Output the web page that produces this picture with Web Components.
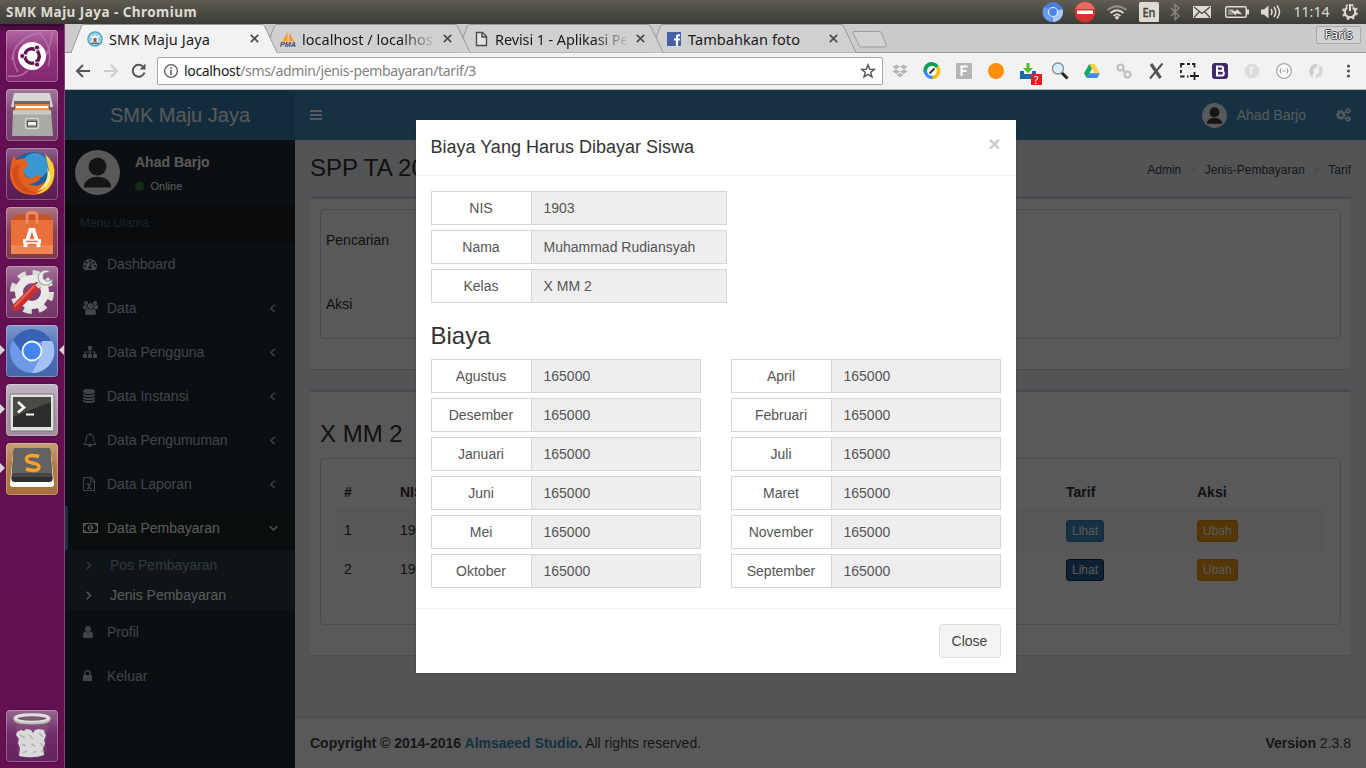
<!DOCTYPE html>
<html lang="id">
<head>
<meta charset="utf-8">
<title>SMK Maju Jaya</title>
<style>
html,body{margin:0;height:100%;overflow:hidden;background:#5e0f50}
</style>
</head>
<body>
<desktop-shell></desktop-shell>
<script>
function define(name, html, setup) {
  const tpl = document.createElement('template');
  tpl.innerHTML = html;
  customElements.define(name, class extends HTMLElement {
    connectedCallback() {
      if (this.shadowRoot) return;
      this.attachShadow({mode: 'open'}).appendChild(tpl.content.cloneNode(true));
      if (setup) setup(this, this.shadowRoot);
    }
  });
}

/* One line of text whose tracking is adjusted so that it takes a given width. */
define('fit-text', `<style>:host{display:inline-block;white-space:nowrap}span{display:inline-block}</style><span><slot></slot></span>`, (el, root) => {
  const s = root.querySelector('span');
  const n = el.textContent.length, w = s.getBoundingClientRect().width;
  if (w) s.style.letterSpacing = ((+el.getAttribute('width') - w) / n).toFixed(3) + 'px';
});

const FA = {
  user: [1280, 'M1280 1399q0 109-62.5 187t-150.5 78h-854q-88 0-150.5-78t-62.5-187q0-85 8.5-160.5t31.5-152 58.5-131 94-89 134.5-34.5q131 128 313 128t313-128q76 0 134.5 34.5t94 89 58.5 131 31.5 152 8.5 160.5zm-256-887q0 159-112.5 271.5t-271.5 112.5-271.5-112.5-112.5-271.5 112.5-271.5 271.5-112.5 271.5 112.5 112.5 271.5z'],
  lock: [1152, 'M320 768h512v-192q0-106-75-181t-181-75-181 75-75 181v192zm832 96v576q0 40-28 68t-68 28h-960q-40 0-68-28t-28-68v-576q0-40 28-68t68-28h32v-192q0-184 132-316t316-132 316 132 132 316v192h32q40 0 68 28t28 68z'],
  sitemap: [1792, 'M1792 1248v320q0 40-28 68t-68 28h-320q-40 0-68-28t-28-68v-320q0-40 28-68t68-28h96v-192h-512v192h96q40 0 68 28t28 68v320q0 40-28 68t-68 28h-320q-40 0-68-28t-28-68v-320q0-40 28-68t68-28h96v-192h-512v192h96q40 0 68 28t28 68v320q0 40-28 68t-68 28h-320q-40 0-68-28t-28-68v-320q0-40 28-68t68-28h96v-192q0-52 38-90t90-38h512v-192h-96q-40 0-68-28t-28-68v-320q0-40 28-68t68-28h320q40 0 68 28t28 68v320q0 40-28 68t-68 28h-96v192h512q52 0 90 38t38 90v192h96q40 0 68 28t28 68z'],
  database: [1536, 'M768 768q237 0 443-43t325-127v170q0 69-103 128t-280 93.5-385 34.5-385-34.5-280-93.5-103-128v-170q119 84 325 127t443 43zm0 768q237 0 443-43t325-127v170q0 69-103 128t-280 93.5-385 34.5-385-34.5-280-93.5-103-128v-170q119 84 325 127t443 43zm0-384q237 0 443-43t325-127v170q0 69-103 128t-280 93.5-385 34.5-385-34.5-280-93.5-103-128v-170q119 84 325 127t443 43zm0-1152q208 0 385 34.5t280 93.5 103 128v128q0 69-103 128t-280 93.5-385 34.5-385-34.5-280-93.5-103-128v-128q0-69 103-128t280-93.5 385-34.5z'],
  left: [704, 'M627 544q0 13-10 23l-393 393 393 393q10 10 10 23t-10 23l-50 50q-10 10-23 10t-23-10l-466-466q-10-10-10-23t10-23l466-466q10-10 23-10t23 10l50 50q10 10 10 23z'],
  down: [1152, 'M1075 736q0 13-10 23l-466 466q-10 10-23 10t-23-10l-466-466q-10-10-10-23t10-23l50-50q10-10 23-10t23 10l393 393 393-393q10-10 23-10t23 10l50 50q10 10 10 23z'],
  bell: [1792, 'M912 1696q0-16-16-16-59 0-101.5-42.5t-42.5-101.5q0-16-16-16t-16 16q0 73 51.5 124.5t124.5 51.5q16 0 16-16zm-666-288h1300q-266-300-266-832 0-51-24-105t-69-103-121.5-80.5-169.5-31.5-169.5 31.5-121.5 80.5-69 103-24 105q0 532-266 832zm1482 0q0 52-38 90t-90 38h-448q0 106-75 181t-181 75-181-75-75-181h-448q-52 0-90-38t-38-90q50-42 91-88t85-119.5 74.5-158.5 50-206 19.5-260q0-152 117-282.5t307-158.5q-8-19-8-39 0-40 28-68t68-28 68 28 28 68q0 20-8 39 190 28 307 158.5t117 282.5q0 139 19.5 260t50 206 74.5 158.5 85 119.5 91 88z'],
  dashboard: [1792, 'M384 1152q0-53-37.5-90.5t-90.5-37.5-90.5 37.5-37.5 90.5 37.5 90.5 90.5 37.5 90.5-37.5 37.5-90.5zm192-448q0-53-37.5-90.5t-90.5-37.5-90.5 37.5-37.5 90.5 37.5 90.5 90.5 37.5 90.5-37.5 37.5-90.5zm428 481l101-382q6-26-7.5-48.5t-38.5-29.5-48 6.5-30 39.5l-101 382q-60 5-107 43.5t-63 98.5q-20 77 20 146t117 89 146-20 89-117q16-60-6-117t-72-91zm660-33q0-53-37.5-90.5t-90.5-37.5-90.5 37.5-37.5 90.5 37.5 90.5 90.5 37.5 90.5-37.5 37.5-90.5zm-640-640q0-53-37.5-90.5t-90.5-37.5-90.5 37.5-37.5 90.5 37.5 90.5 90.5 37.5 90.5-37.5 37.5-90.5zm448 192q0-53-37.5-90.5t-90.5-37.5-90.5 37.5-37.5 90.5 37.5 90.5 90.5 37.5 90.5-37.5 37.5-90.5zm320 448q0 261-141 483-19 29-54 29h-1402q-35 0-54-29-141-221-141-483 0-182 71-348t191-286 286-191 348-71 348 71 286 191 191 286 71 348z'],
  money: [1920, 'M768 1152h384v-96h-128v-448h-114l-148 137 77 80q42-37 55-57h2v288h-128v96zm512-256q0 70-21 142t-59.5 134-101.5 101-138 39-138-39-101.5-101-59.5-134-21-142 21-142 59.5-134 101.5-101 138-39 138 39 101.5 101 59.5 134 21 142zm512 256v-512q-106 0-181-75t-75-181h-1152q0 106-75 181t-181 75v512q106 0 181 75t75 181h1152q0-106 75-181t181-75zm128-832v1152q0 26-19 45t-45 19h-1792q-26 0-45-19t-19-45v-1152q0-26 19-45t45-19h1792q26 0 45 19t19 45z'],
  users: [1920, 'M593 896q-162 5-265 128h-134q-82 0-138-40.5t-56-118.5q0-353 124-353 6 0 43.5 21t97.5 42.5 119 21.5q67 0 133-23-5 37-5 66 0 159 90 287zm1071 637q0 120-73 189.5t-194 69.5h-874q-121 0-194-69.5t-73-189.5q0-53 3.5-103.5t14-109 26.5-108.5 43-97.5 62-81 85.5-53.5 111.5-20q10 0 43 21.5t73 48 107 48 135 21.5 135-21.5 107-48 73-48 43-21.5q61 0 111.5 20t85.5 53.5 62 81 43 97.5 26.5 108.5 14 109 3.5 103.5zm-1024-1277q0 106-75 181t-181 75-181-75-75-181 75-181 181-75 181 75 75 181zm704 384q0 159-112.5 271.5t-271.5 112.5-271.5-112.5-112.5-271.5 112.5-271.5 271.5-112.5 271.5 112.5 112.5 271.5zm576 225q0 78-56 118.5t-138 40.5h-134q-103-123-265-128 90-128 90-287 0-29-5-66 66 23 133 23 59 0 119-21.5t97.5-42.5 43.5-21q124 0 124 353zm-128-609q0 106-75 181t-181 75-181-75-75-181 75-181 181-75 181 75 75 181z'],
  excel: [1536, 'M1468 380q28 28 48 76t20 88v1152q0 40-28 68t-68 28h-1344q-40 0-68-28t-28-68v-1600q0-40 28-68t68-28h896q40 0 88 20t76 48zm-444-244v376h376q-10-29-22-41l-313-313q-12-12-41-22zm384 1528v-1024h-416q-40 0-68-28t-28-68v-416h-768v1536h1280zM430 1430h280v110h-280zM830 1430h290v110h-290zM430 800h280v110h-280zM830 800h270v110h-270zM500 860h165l370 630h-165zM870 860h165l-370 630h-165z']
};
define('fa-icon', `<style>:host{display:inline-block;height:14px;line-height:0}svg{display:block;fill:currentColor;stroke:currentColor;stroke-width:0}.angle{stroke-width:60px}</style><svg height="14"><path/></svg>`, (el, root) => {
  const name = el.getAttribute('name'), [w, d] = FA[name], s = root.querySelector('svg');
  s.setAttribute('viewBox', `0 0 ${w} 1792`);
  s.setAttribute('width', w / 128);
  root.querySelector('path').setAttribute('d', d);
  if (name === 'left' || name === 'down') s.classList.add('angle');
  if (el.hasAttribute('flip')) s.style.transform = 'scaleX(-1)';
});

define('user-avatar', `<style>:host{display:block;flex:none;width:var(--s);height:var(--s)}svg{display:block}</style>
<svg width="100%" height="100%" viewBox="0 0 45 45"><circle cx="22.5" cy="22.5" r="22.5" fill="#fff"/><circle cx="22.5" cy="16.6" r="9" fill="#3d3d3d"/><path d="M9 37.5V35c1.500-5 7-8.300 13.500-8.300S34.500 30 36 35v2.500z" fill="#3d3d3d"/></svg>`);

/* ---------- top panel ---------- */
define('top-panel', `<style>
:host{display:flex;align-items:center;justify-content:space-between;box-sizing:border-box;height:24px;padding:0 6px;background:linear-gradient(#5f5d52,#4c4b44 50%,#3c3b37);color:#dfdbd2;font-family:"Noto Sans",sans-serif}
b{font-size:13.500px;line-height:22px}
svg{display:block}
</style>
<b><fit-text width="191">SMK Maju Jaya - Chromium</fit-text></b>
<svg width="324" height="24" viewBox="1036 0 324 24">
<circle cx="1053" cy="12" r="10" fill="#4a80dc"/><path d="M1053 12L1044 7a10 10 0 0 0 7 15z" fill="#6b9bec"/><path d="M1053 12l9.500-3a10 10 0 0 1-10 13z" fill="#a9c7f8"/><circle cx="1053" cy="12" r="4.500" fill="#4a84e4" stroke="#dfeaff" stroke-width="1.200"/>
<circle cx="1085" cy="12" r="10.500" fill="#d8302b"/><path d="M1075.500 9a10 10 0 0 1 19 0z" fill="#e56b62"/><rect x="1077" y="10.500" width="16" height="3.500" fill="#fff"/>
<g fill="none" stroke="#dfdbd2" stroke-width="1.700"><path d="M1107.500 10q9.500-7.500 19 0" opacity=".45"/><path d="M1110.500 13q6.500-5.500 13 0M1113.500 15.800q3.500-3 7 0"/></g><path d="M1114.500 17l2.500-1 2.500 1-2.500 3z" fill="#dfdbd2"/>
<rect x="1139" y="2" width="20" height="20" rx="1.500" fill="#dfdbd2"/><text x="1142.500" y="17" font-size="13" font-weight="500" textLength="13" lengthAdjust="spacingAndGlyphs" fill="#45443e" stroke="#45443e" stroke-width=".3" font-family="Noto Sans">En</text>
<path d="M1171 8l8 8-4 3.500V4.500l4 3.500-8 8" fill="none" stroke="#8d8a82" stroke-width="1.300"/>
<rect x="1193" y="6" width="18" height="12" fill="#dfdbd2"/><path d="M1194 7l8 6.500 8-6.500M1194 17.500l5.500-6M1210 17.500l-5.500-6" fill="none" stroke="#45443e" stroke-width="1.200"/>
<rect x="1225.750" y="6.750" width="20.500" height="10.500" rx="1.500" fill="none" stroke="#dfdbd2" stroke-width="1.500"/><rect x="1247" y="9.500" width="2" height="5" fill="#dfdbd2"/><rect x="1228" y="9" width="5" height="6" fill="#8d8a82"/><path d="M1230 10l6 1 1-2 5.500 5.500-6-1-1 2z" fill="#dfdbd2"/>
<path d="M1261 9.500h3l4.500-4v13l-4.500-4h-3z" fill="#dfdbd2"/><path d="M1271 9q2 3 0 6M1274 7q3.500 5 0 10M1277 5.500q5 6.500 0 13" fill="none" stroke="#dfdbd2" stroke-width="1.500"/>
<text x="1293.500" y="17" font-size="14" textLength="36" fill="#dfdbd2" font-family="Noto Sans">11:14</text>
<g fill="none" stroke="#dfdbd2"><path d="M1347.300 7.500a5.300 5.300 0 1 0 5.400 0" stroke-width="2.200"/><path d="M1350 4v7" stroke-width="2"/><circle cx="1350" cy="12" r="7" stroke-width="2" stroke-dasharray="2.200 3.300" stroke-dashoffset="-1"/></g>
</svg>`);

/* ---------- launcher ---------- */
const APPS = {
  dash: ['#8d2a78', `<path d="M2 46Q16 48 22 40M46 2Q44 26 30 40M6 30Q8 8 34 3Q48 20 42 36M12 42Q0 20 18 10" fill="none" stroke="#c083b4" stroke-width="1.600" opacity=".7"/><circle cx="26" cy="26" r="14" fill="#fff"/><circle cx="26" cy="26" r="7.300" fill="none" stroke="#64124f" stroke-width="3.400" stroke-dasharray="13.800 1.500" stroke-dashoffset="-9"/><g fill="#64124f" stroke="#fff" stroke-width=".8"><circle cx="16.300" cy="26" r="2.500"/><circle cx="31" cy="17.500" r="2.500"/><circle cx="31" cy="34.500" r="2.500"/></g>`],
  files: ['#7c3f70', `<path d="M8 4h36l3 14H5z" fill="#d6d6d4"/><path d="M8 12h36v12H8z" fill="#6a6a66"/><path d="M9 15h34v4H9z" fill="#e9853c"/><path d="M10 17h32v2H10z" fill="#fff"/><path d="M9 19h34v3H9z" fill="#ef9d4d"/><path d="M7 21.500h38l2 25.500H6z" fill="#a9a9a6"/><path d="M7 21.500h38v4H7z" fill="#c9c9c6"/><rect x="19.500" y="29.500" width="13" height="10" rx="2" fill="#8d8d8a" stroke="#d7d7d4" stroke-width="1.500"/><rect x="21.500" y="32.500" width="9" height="4.500" fill="#eee" stroke="#555"/>`],
  firefox: ['#5f1f58', `<circle cx="27" cy="25" r="21" fill="#1e5f9e"/><circle cx="29" cy="18" r="13" fill="#3b97cf"/><path d="M8 8q1 3 3 4 6-3 9 0-2 3 3 3-2 4-5 6-1 7 5 9 5 0 8-3 3 0 4 2-3 6-12 7 10 5 19-5 5-6 4-19 4 8 2 19Q44 46 27 47 6 46 4 27 4 15 8 8z" fill="#e4601f"/><path d="M39 6q11 9 9 22-3 16-18 18 12-6 13-18 0-10-4-22z" fill="#fad13c"/><path d="M41 20q3 14-10 23 12-3 14-15z" fill="#fff0a0"/><path d="M6 22q4-6 8-5-4 10 2 18 6 8 16 10Q8 48 6 22z" fill="#d44e1c"/>`],
  software: ['#873c54', `<path d="M5 13h42v34H5z" fill="#e9703a"/><path d="M5 13l5-6h32l5 6z" fill="#c65427"/><path d="M5 38h42v9H5z" fill="#f08452"/><path d="M21 17V9q0-3.500 5-3.500T31 9v8" fill="none" stroke="#ee8b62" stroke-width="2.800"/><path d="M19 40l5.500-17h3L33 40" fill="none" stroke="#fff" stroke-width="3.800"/><path d="M17 34.500h18" stroke="#fff" stroke-width="4.500"/><path d="M20 34.500h12" stroke="#e9703a" stroke-width="1.500"/>`],
  settings: ['#7b3a70', `<circle cx="26" cy="26" r="18.500" fill="none" stroke="#dddddb" stroke-width="7" stroke-dasharray="8 6.530"/><circle cx="26" cy="26" r="13" fill="none" stroke="#e9e9e7" stroke-width="8"/><path d="M10 41L31 20" stroke="#c9302c" stroke-width="7.500" stroke-linecap="round"/><path d="M9 40L28 20" stroke="#e5635c" stroke-width="2" stroke-linecap="round"/><path d="M31 21l7-7" stroke="#d5d5d3" stroke-width="5"/><path d="M44 5.500a7.500 7.500 0 1 0 3 8l-6 2-4-3 .500-5z" fill="#ececea" stroke="#8b8b88" stroke-width=".8"/>`],
  chromium: ['#4a6cb5', `<circle cx="26" cy="26" r="22" fill="#6d99e6"/><path d="M7 15a22 22 0 0 1 39 2H26l-9 12z" fill="#3a62b4"/><path d="M46 16a22 22 0 0 1-20 32l9-17 1-15z" fill="#a3c1f6"/><circle cx="26" cy="26" r="9.500" fill="#4585ee" stroke="#f2f6ff" stroke-width="1.800"/>`],
  terminal: ['#a996a8', `<rect x="4" y="10" width="44" height="37" rx="1.500" fill="#e2e2df" stroke="#77757a"/><rect x="7" y="13" width="38" height="30" fill="#2c2c2a"/><path d="M7 13h38v5L7 33z" fill="#4a4a47"/><path d="M12 18l6 5.500-6 5" fill="none" stroke="#fff" stroke-width="2.600"/><path d="M20 30.500h8" stroke="#fff" stroke-width="2"/>`],
  sublime: ['#b0763f', `<path d="M7 12h38l3 29q0 3-3 3H7q-3 0-3-3z" fill="#fff"/><path d="M10 5h32q2 0 2.300 2l2.200 26q0 5-3 5h-35q-3 0-3-5L7.700 7q.3-2 2.300-2z" fill="#464646"/><path d="M10 5h32q2 0 2.300 2l1.700 23H6L7.700 7q.3-2 2.300-2z" fill="#626262"/><path d="M5.500 34h41v2q0 3-3 3h-35q-3 0-3-3z" fill="#2e2e2e"/><path d="M33 13.500q-12-3-12.500 2.500 0 3 6 4 7 1 6.500 4.500-1 5-13 1.500" fill="none" stroke="#ffa22b" stroke-width="3.400"/>`],
  trash: ['#6b2462', `<path d="M10 12h32l-3 33q-1 3-13 3t-14-3z" fill="#b9a3b9" opacity=".15"/><path d="M11 22l4-2 3 1 2-2 5 1 2 3 2-3 4-1 5 1 1 4 1 1-2 5 1 4-2 4 1 7q-11 4-25 1l1-8-2-5 1-4-3-4z" fill="#d9dbd8"/><path d="M14 25l5 3M23 25l4 4M33 23l4 4M16 34l4 2M25 34l4 2M34 33l3 3M17 43l4-2M27 43l3-2M35 42l2-2" fill="none" stroke="#b2b4b0" stroke-width="1.500"/><ellipse cx="26" cy="8.500" rx="17" ry="3.800" fill="#7b5776" stroke="#e0e0dd" stroke-width="3"/><path d="M7.800 9q4 3.500 18.200 3.500T44.200 9l-.5 2.500Q40 14.500 26 14.500T8.300 11.500z" fill="#bdbdba"/>`]
};
define('launcher-tile', `<style>
:host{display:block;position:relative;width:52px;height:52px}
.t{box-sizing:border-box;width:52px;height:52px;border-radius:4px;overflow:hidden;box-shadow:inset 0 0 0 1px rgba(255,255,255,.28),0 0 2px rgba(0,0,0,.3)}
svg{display:block}
i{position:absolute;top:20px;border:6px solid transparent;border-width:5.500px 5px}
.l{left:-6px;border-left-color:#d9d4da;border-right:0}
.r{right:-6px;border-right-color:#d9d4da;border-left:0}
</style><div class="t"><svg width="52" height="52" viewBox="0 0 52 52"></svg></div>`, (el, root) => {
  const [bg, art] = APPS[el.getAttribute('app')];
  root.querySelector('.t').style.background = `linear-gradient(rgba(255,255,255,.3),rgba(255,255,255,.04) 45%,rgba(0,0,0,.06)),${bg}`;
  root.querySelector('svg').innerHTML = art;
  if (el.hasAttribute('running')) root.innerHTML += '<i class="l"></i>';
  if (el.hasAttribute('focused')) root.innerHTML += '<i class="r"></i>';
});
define('unity-launcher', `<style>
:host{display:flex;flex-direction:column;gap:7px;box-sizing:border-box;width:65px;padding:6px 6px;border-right:1px solid #87427c;background:linear-gradient(#35082d,#640f55 8px,#64114f)}
launcher-tile:last-child{margin-top:auto}
</style>
<launcher-tile app="dash"></launcher-tile><launcher-tile app="files"></launcher-tile><launcher-tile app="firefox"></launcher-tile><launcher-tile app="software"></launcher-tile><launcher-tile app="settings"></launcher-tile><launcher-tile app="chromium" running focused></launcher-tile><launcher-tile app="terminal" running></launcher-tile><launcher-tile app="sublime" running></launcher-tile><launcher-tile app="trash"></launcher-tile>`);

/* ---------- browser ---------- */
define('browser-tab', `<style>
:host{display:grid;grid-template-columns:16px 131px 1fr;column-gap:6px;align-items:center;position:relative;box-sizing:border-box;width:193px;height:29px;padding:0 0 0 10px;color:#1a1a1a;font:14.500px "Noto Sans",sans-serif;--fill:#d0d0d0}
:host([active]){--fill:#f2f2f2}
.shape{position:absolute;left:-8px;top:0;z-index:-1}
.title{overflow:hidden;white-space:nowrap;line-height:24px}
:host([fade]) .title{-webkit-mask-image:linear-gradient(90deg,#000 98px,transparent 136px)}
.x{display:block;margin-left:3.500px}
::slotted(svg){display:block}
</style>
<svg class="shape" width="212" height="29" viewBox="-8 0 212 29"><path d="M-6 28.500L4.500 2q.7-1.500 2.500-1.500H185q1.800 0 2.500 1.500L200 28.500" fill="var(--fill)" stroke="#989898"/></svg>
<slot name="icon"></slot><span class="title"><slot></slot></span>
<svg class="x" width="9" height="9" viewBox="0 0 9 9"><path d="M.8.8l7.400 7.400M8.200.8L.8 8.200" stroke="#4d4d4d" stroke-width="1.700"/></svg>`, (el, root) => {
  if (el.hasAttribute('active')) root.querySelector('.shape').insertAdjacentHTML('beforeend', '<path d="M-5 28.500H199" stroke="#f2f2f2"/>');
});
define('tab-strip', `<style>
:host{display:flex;align-items:flex-start;box-sizing:border-box;height:29px;padding-left:12px;padding-right:5px;background:linear-gradient(#cbcbcb,#cbcbcb 28px,#989898 28px)}
browser-tab:nth-of-type(1){z-index:4}browser-tab:nth-of-type(2){z-index:3}browser-tab:nth-of-type(3){z-index:2}browser-tab:nth-of-type(4){z-index:1}
.new{margin:7px auto 0 3px}
.who{box-sizing:border-box;width:45px;height:18px;margin-top:2px;border:1px solid #a9a9a9;border-radius:2px;background:#d2d2d2;font:12.500px/15px "Noto Sans",sans-serif;text-align:center;color:#fff;text-shadow:1px 0 #444,-1px 0 #444,0 1px #444,0 -1px #444}
svg{display:block}
</style>
<browser-tab active><svg slot="icon" width="16" height="16"><circle cx="8" cy="8" r="7.800" fill="#5c9fb8"/><circle cx="8" cy="8" r="6.500" fill="#8fd0e4"/><path d="M8 2.500l1 3 4-1.500-2.500 4.500L13 12H3l2.500-3.500L3 4l4 1.500z" fill="#e8f2f5"/><path d="M6.500 7h3v4h-3z" fill="#a45a3a"/><path d="M4 11.500h8v1.500H4z" fill="#36729b"/></svg><fit-text width="101">SMK Maju Jaya</fit-text></browser-tab>
<browser-tab fade><svg slot="icon" width="16" height="16"><path d="M7.500 1v9H2.500zM10.500 3l3 7H9V4z" fill="#f59a22"/><path d="M1 10h14v.8H1z" fill="#f8b65c"/><text x="0" y="16" font-size="6.500" font-weight="bold" font-style="italic" textLength="16" lengthAdjust="spacingAndGlyphs" fill="#44446f" font-family="Liberation Sans">PMA</text></svg><fit-text width="136">localhost / localhost</fit-text></browser-tab>
<browser-tab fade><svg slot="icon" width="16" height="16"><path d="M3.500 1.500h6l4 4v9h-10zM9 1.500v4.500h4.500" fill="#e4e4e4" stroke="#4d4d4d" stroke-width="1.400"/></svg><fit-text width="147">Revisi 1 - Aplikasi Pem</fit-text></browser-tab>
<browser-tab><svg slot="icon" width="16" height="16"><rect x="1" y="1" width="14" height="14" rx="1" fill="#4760a5"/><path d="M14 3.200h-1.600q-2.500 0-2.500 2.600v1.700H8v2h1.900V15h2.200V9.500h1.700l.3-2h-2V6.200q0-1 1-1H14z" fill="#fff"/></svg><fit-text width="112">Tambahkan foto</fit-text></browser-tab>
<svg class="new" width="38" height="18" viewBox="852 31 38 18"><path d="M854 31.500h25.500q1.500 0 2 1.300l5 12.700q.5 1.500-1.200 1.500h-24q-1.500 0-2-1.300L853 33q-.5-1.500 1-1.500z" fill="#d2d2d2" stroke="#9a9a9a"/></svg>
<span class="who">Faris</span>`);

define('ext-icon', `<style>:host{display:block;width:16px;height:20px}svg{display:block;overflow:visible}</style><svg width="16" height="20" viewBox="0 0 16 20"></svg>`, (el, root) => {
  root.querySelector('svg').innerHTML = {
    dropbox: '<g fill="#b5b5b5"><path d="M4.500 2L8 4.300 4 6.700.500 4.400zM11.500 2L8 4.300l4 2.400 3.500-2.300zM.5 9L4 6.700 8 9l-3.500 2.400zM15.500 9L12 6.700 8 9l3.500 2.400zM4.500 12.500L8 10.300l3.500 2.200L8 15z" transform="translate(0 1.500)"/></g>',
    ring: '<g fill="none" stroke-width="4"><path d="M2 12A6.200 6.200 0 0 1 13.300 6.500" stroke="#109d58"/><path d="M13 6a6.200 6.200 0 0 1-5 10" stroke="#fbbc05"/><path d="M8.500 16A6.200 6.200 0 0 1 1.800 10" stroke="#4285f4"/></g><circle cx="8" cy="10" r="4.800" fill="#fff"/><path d="M5.500 12.500l5-5" stroke="#333" stroke-width="1.800"/>',
    f: '<rect y="2" width="16" height="16" rx="1" fill="#b5b5b5"/><path d="M5.500 15V5.500h6M5.500 10h5" fill="none" stroke="#fff" stroke-width="2"/>',
    orange: '<circle cx="8" cy="10" r="8" fill="#ff8f0d"/>',
    down: '<path d="M0 10v8h16v-8h-4v3H4v-3z" fill="#1b6aad"/><path d="M6.500 2h3v5H13l-5 5-5-5h3.500z" fill="#4fc01f"/><rect x="11" y="13" width="11" height="11" fill="#e02020"/><text x="14" y="22.500" font-size="10" fill="#fff" font-family="Noto Sans">?</text>',
    search: '<path d="M9.500 11.500l6 6" stroke="#222" stroke-width="3"/><circle cx="6" cy="7.500" r="5.500" fill="#d5eefa" stroke="#8b8f92" stroke-width="1.400"/>',
    drive: '<path d="M5.300 3h5.400L16 12.300h-5.300z" fill="#ffcf48"/><path d="M5.300 3L8 7.700 2.700 17 0 12.300z" fill="#11a861"/><path d="M5.300 12.300H16L13.300 17H2.700z" fill="#4688f1"/>',
    link: '<g fill="none" stroke="#c0c0c0" stroke-width="2.200"><circle cx="4.500" cy="6.500" r="3"/><circle cx="11.500" cy="13.500" r="3"/><path d="M6.500 8.500l3 3"/></g>',
    x: '<path d="M3 3l9.500 14" stroke="#555" stroke-width="3.200"/><path d="M14.500 2.500L2 17.500" stroke="#555" stroke-width="2"/>',
    crop: '<path d="M1 6.500V3h3.500M7 3h3M12 3h2.500v3.500M1 9v3M1 14.500h0v1H4.500M7 15.500h1.500M14.500 11v8M10 15h9" fill="none" stroke="#222" stroke-width="1.800"/>',
    b: '<rect y="2" width="16" height="16" rx="3" fill="#3f2a67"/><path d="M5 5.500h4a2.100 2.100 0 0 1 0 4.300H5zM5 9.800h4.500a2.300 2.300 0 0 1 0 4.700H5z" fill="none" stroke="#fff" stroke-width="2"/>',
    oct: '<path d="M5 3h6l4.500 4.500v5L11 17H5L.5 12.500v-5z" fill="#dcdcdc"/><path d="M7 13V8q.5-1.500 2.500-1" fill="none" stroke="#f8f8f8" stroke-width="1.600"/>',
    braces: '<circle cx="8" cy="10" r="7.400" fill="#fff" stroke="#aaa" stroke-width="1.300"/><path d="M5.500 7.500q-1.500 0-1 1.500t-1 1q1.500 0 1 1t1 1.500M10.500 7.500q1.500 0 1 1.500t1 1q-1.500 0-1 1t-1 1.500M6.500 10h3" fill="none" stroke="#999"/>',
    swirl: '<path d="M9 3A7.200 7.200 0 0 0 5 16.500q-1-3 1-4.500A3.500 3.500 0 0 1 9 6.500z" fill="#cdcdcd"/><path d="M11 3.500q1 2.500-.500 4.500A3.500 3.500 0 0 1 8 13.500l-1 3.500A7.200 7.200 0 0 0 11 3.500z" fill="#d8d8d8"/>',
    menu: '<g fill="#555"><circle cx="8.500" cy="5" r="1.600"/><circle cx="8.500" cy="10" r="1.600"/><circle cx="8.500" cy="15" r="1.600"/></g>'
  }[el.getAttribute('name')];
});
define('browser-toolbar', `<style>
:host{display:flex;align-items:center;box-sizing:border-box;height:37px;padding:0 10px;background:#f2f2f2;border-bottom:1px solid #b4b8ba}
.nav{display:flex;width:82px;gap:12px;align-items:center}
.url{display:flex;align-items:center;box-sizing:border-box;width:726px;height:28px;padding:0 6px 0 5px;border:1px solid #a7a7a7;border-radius:2px;background:#fff;color:#808080;font:14px/22px "Noto Sans",sans-serif}
.url fit-text{margin:0 auto 0 5px}
em{font-style:normal;color:#1a1a1a}
svg{display:block}
.ext{display:flex;gap:16px;margin-left:9px}
</style>
<div class="nav">
<svg width="16" height="16"><path d="M15 8H2.500M8 2L2 8l6 6" fill="none" stroke="#555" stroke-width="2"/></svg>
<svg width="16" height="16"><path d="M1 8h12.500M8 2l6 6-6 6" fill="none" stroke="#ccc" stroke-width="2"/></svg>
<svg width="16" height="16"><path d="M13.500 9.500A6 6 0 1 1 12.500 4" fill="none" stroke="#555" stroke-width="2"/><path d="M14.500.5v6h-6z" fill="#555"/></svg>
</div>
<div class="url"><svg width="16" height="16"><circle cx="8" cy="8" r="6.400" fill="none" stroke="#5a5a5a" stroke-width="1.300"/><path d="M8 7v5M8 4.200v1.600" stroke="#5a5a5a" stroke-width="1.600"/></svg>
<fit-text width="292"><em>localhost</em>/sms/admin/jenis-pembayaran/tarif/3</fit-text>
<svg width="16" height="16"><path d="M8 1.800l1.700 4.400 4.700.2-3.700 2.900 1.300 4.600L8 11.300l-4 2.600 1.300-4.600L1.600 6.400l4.700-.2z" fill="none" stroke="#555" stroke-width="1.400"/></svg></div>
<div class="ext"><ext-icon name="dropbox"></ext-icon><ext-icon name="ring"></ext-icon><ext-icon name="f"></ext-icon><ext-icon name="orange"></ext-icon><ext-icon name="down"></ext-icon><ext-icon name="search"></ext-icon><ext-icon name="drive"></ext-icon><ext-icon name="link"></ext-icon><ext-icon name="x"></ext-icon><ext-icon name="crop"></ext-icon><ext-icon name="b"></ext-icon><ext-icon name="oct"></ext-icon><ext-icon name="braces"></ext-icon><ext-icon name="swirl"></ext-icon><ext-icon name="menu"></ext-icon></div>`);

/* ---------- admin page ---------- */
define('admin-header', `<style>
:host{display:flex;height:50px;color:#fff;background:#3c8dbc}
.logo{width:230px;background:#367fa9;font-size:20px;line-height:50px;text-align:center}
nav{flex:1;display:flex;align-items:center;padding:0 15px}
user-avatar{--s:25px;margin:0 10px 0 auto}
.g{margin-left:30px}
svg{display:block}
</style>
<div class="logo">SMK Maju Jaya</div>
<nav><svg width="12" height="14"><path d="M0 3h12M0 7h12M0 11h12" stroke="#fff" stroke-width="2"/></svg>
<user-avatar></user-avatar><span>Ahad Barjo</span>
<svg class="g" width="15" height="14" viewBox="0 0 15 14" fill="none" stroke="#fff"><circle cx="5" cy="7" r="2.900" stroke-width="2.200"/><circle cx="5" cy="7" r="4.400" stroke-width="1.600" stroke-dasharray="1.800 1.656" stroke-dashoffset=".9"/><circle cx="12" cy="3" r="1.600" stroke-width="1.400"/><circle cx="12" cy="3" r="2.500" stroke-width="1" stroke-dasharray="1.100 .863"/><circle cx="12" cy="11" r="1.600" stroke-width="1.400"/><circle cx="12" cy="11" r="2.500" stroke-width="1" stroke-dasharray="1.100 .863"/></svg></nav>`);

define('menu-item', `<style>
:host{display:flex;align-items:center;box-sizing:border-box;height:44px;padding:0 15px 0 15px;border-left:3px solid transparent;color:#b8c7ce}
:host([active]){color:#fff;background:#1e282c;border-left-color:#3c8dbc}
:host([sub]){height:30px;border-left:0;color:#8aa4af;padding-left:20px;margin:0 1px;background:#2c3b41}
:host([sub][active]){color:#fff}
.i{width:24px;line-height:0}
.a{margin-left:auto;width:10px;line-height:0;padding-bottom:1px}
:host([active]) .a{width:11px}
</style><span class="i"></span><span><slot></slot></span><span class="a"></span>`, (el, root) => {
  const sub = el.hasAttribute('sub');
  root.querySelector('.i').innerHTML = sub ? '<fa-icon name="left" flip></fa-icon>' : `<fa-icon name="${el.getAttribute('icon')}"></fa-icon>`;
  if (el.hasAttribute('tree')) root.querySelector('.a').innerHTML = `<fa-icon name="${el.getAttribute('tree')}"></fa-icon>`;
});
define('admin-sidebar', `<style>
:host{display:block;width:230px;background:#222d32;color:#fff}
.user{display:flex;gap:15px;height:65px;box-sizing:border-box;padding:10px}
user-avatar{--s:45px}
.user div{display:flex;flex-direction:column;padding-top:4px}
b{line-height:16px;margin-bottom:8px}
small{display:flex;align-items:center;gap:6.500px;font-size:11px;line-height:16px}
small i{width:9px;height:9px;border-radius:50%;background:#3c763d}
h4{margin:0;height:37px;padding-left:15px;background:#1a2226;color:#4b646f;font-size:12px;line-height:36px;font-weight:400}
</style>
<div class="user"><user-avatar></user-avatar><div><b>Ahad Barjo</b><small><i></i>Online</small></div></div>
<h4>Menu Utama</h4>
<menu-item icon="dashboard">Dashboard</menu-item>
<menu-item icon="users" tree="left">Data</menu-item>
<menu-item icon="sitemap" tree="left">Data Pengguna</menu-item>
<menu-item icon="database" tree="left">Data Instansi</menu-item>
<menu-item icon="bell" tree="left">Data Pengumuman</menu-item>
<menu-item icon="excel" tree="left">Data Laporan</menu-item>
<menu-item icon="money" tree="down" active>Data Pembayaran</menu-item>
<menu-item sub>Pos Pembayaran</menu-item>
<menu-item sub active>Jenis Pembayaran</menu-item>
<menu-item icon="user">Profil</menu-item>
<menu-item icon="lock">Keluar</menu-item>`);

define('content-box', `<style>
:host{display:block;box-sizing:border-box;padding:10px;margin-bottom:20px;border-top:3px solid #d2d6de;border-radius:3px;background:#fff;box-shadow:0 1px 1px rgba(0,0,0,.1)}
.f{box-sizing:border-box;border:1px solid #d2d6de;border-radius:4px;height:var(--h);padding:var(--p)}
</style><slot name="title"></slot><div class="f"><slot></slot></div>`);

define('small-button', `<style>:host{display:block;box-sizing:border-box;width:max-content;height:22px;padding:0 5px;border:1px solid #367fa9;border-radius:3px;background:#3c8dbc;color:#fff;font-size:12px;line-height:20px}
:host([kind=warn]){background:#f39c12;border-color:#e08e0b}
:host([kind=pressed]){background:#286090;border-color:#122b40}</style><slot></slot>`);

define('admin-content', `<style>
:host{display:flex;flex-direction:column;flex:1;min-width:0;background:#ecf0f5;color:#333}
header{display:flex;justify-content:space-between;height:56px;padding:0 15px;box-sizing:border-box}
h1{margin:15px 0 0;font-size:24px;line-height:26px;font-weight:400}
.crumb{display:flex;font-size:12px;line-height:14px;margin-top:23px;color:#444}
.crumb i{font-style:normal;color:#ccc;width:23.500px;padding-left:8px;box-sizing:border-box}
main{flex:1;padding:0 15px}
content-box:nth-child(1){height:173px;--h:130px;--p:20px 5px}
content-box:nth-child(2){height:266px;--h:167px;--p:13px 15px}
p{margin:0 0 44px;line-height:20px}
h3{margin:0;font-size:24px;font-weight:400;line-height:26px;padding:19px 0 11px}
.row{display:grid;grid-template-columns:56px 666px 131px 1fr;padding:0 0 3px 8px;height:39px;box-sizing:border-box;align-items:center}
.head{font-weight:700;border-bottom:2px solid #f4f4f4;height:40px;padding-bottom:0;padding-top:1px}
.odd{background:#f9f9f9}
.odd+.row{border-top:1px solid #f4f4f4;padding-bottom:4px}
.row small-button{margin-bottom:-2px}
footer{display:flex;justify-content:space-between;box-sizing:border-box;height:51px;padding:15px;border-top:1px solid #d2d6de;background:#fff;color:#444;line-height:20px}
a{color:#3c8dbc}
</style>
<header><h1>SPP TA 2016/2017</h1><div class="crumb">Admin<i>&gt;</i>Jenis-Pembayaran<i>&gt;</i>Tarif</div></header>
<main>
<content-box><p>Pencarian</p><p>Aksi</p></content-box>
<content-box><h3 slot="title">X MM 2</h3>
<div class="row head"><span>#</span><span>NIS</span><span>Tarif</span><span>Aksi</span></div>
<div class="row odd"><span>1</span><span>1902</span><small-button>Lihat</small-button><small-button kind="warn">Ubah</small-button></div>
<div class="row"><span>2</span><span>1903</span><small-button kind="pressed">Lihat</small-button><small-button kind="warn">Ubah</small-button></div>
</content-box>
</main>
<footer><span><b>Copyright © 2014-2016 <a>Almsaeed Studio</a>.</b> All rights reserved.</span><span><b>Version</b> 2.3.8</span></footer>`);

define('field-row', `<style>
:host{display:grid;grid-template-columns:100px 1fr;height:34px;color:#555;line-height:32px}
span{box-sizing:border-box;border:1px solid #d2d6de}
.l{border-right:0;text-align:center;background:#fff}
.v{background:#eee;padding-left:12px}
</style><span class="l"></span><span class="v"><slot></slot></span>`, (el, root) => {
  root.querySelector('.l').textContent = el.getAttribute('label');
});
define('fee-modal', `<style>
:host{display:flex;justify-content:center;align-items:flex-start;position:absolute;inset:0;padding-top:30px;background:rgba(0,0,0,.65);color:#333}
section{width:600px;background:#fff;box-shadow:0 2px 3px rgba(0,0,0,.125)}
header{display:flex;justify-content:space-between;box-sizing:border-box;height:56px;padding:15px;border-bottom:1px solid #f4f4f4;font-size:18px;line-height:24px}
.x{font-size:21px;font-weight:700;line-height:18px;color:#ccc}
.body{padding:15px 15px 0;height:432px;box-sizing:border-box}
.who,.fees{display:grid;row-gap:5px}
.who{width:296px}
h3{margin:20px 0 10px;font-size:24px;font-weight:400;line-height:26px}
.fees{grid-template-columns:270px 270px;column-gap:30px}
footer{box-sizing:border-box;height:65px;padding:15px;border-top:1px solid #f4f4f4;display:flex;justify-content:flex-end}
button{box-sizing:border-box;height:34px;width:62px;padding:0;border:1px solid #ddd;border-radius:3px;background:#f4f4f4;color:#444;font:inherit}
</style>
<section>
<header><span>Biaya Yang Harus Dibayar Siswa</span><span class="x">×</span></header>
<div class="body">
<div class="who"><field-row label="NIS">1903</field-row><field-row label="Nama">Muhammad Rudiansyah</field-row><field-row label="Kelas">X MM 2</field-row></div>
<h3>Biaya</h3>
<div class="fees"></div>
</div>
<footer><button>Close</button></footer>
</section>`, (el, root) => {
  root.querySelector('.fees').innerHTML = ['Agustus', 'April', 'Desember', 'Februari', 'Januari', 'Juli', 'Juni', 'Maret', 'Mei', 'November', 'Oktober', 'September']
    .map(m => `<field-row label="${m}">165000</field-row>`).join('');
});

define('admin-page', `<style>
:host{display:flex;flex-direction:column;position:relative;flex:1;min-height:0;font:14px "Liberation Sans",Arial,sans-serif}
.b{display:flex;flex:1;min-height:0}
</style><admin-header></admin-header><div class="b"><admin-sidebar></admin-sidebar><admin-content></admin-content></div><fee-modal></fee-modal>`);

define('desktop-shell', `<style>
:host{display:grid;grid-template:24px 744px / 65px 1301px;width:1366px;height:768px;overflow:hidden}
top-panel{grid-column:1 / 3}
.w{display:flex;flex-direction:column;min-height:0}
tab-strip{position:relative;z-index:0}
</style><top-panel></top-panel><unity-launcher></unity-launcher><div class="w"><tab-strip></tab-strip><browser-toolbar></browser-toolbar><admin-page></admin-page></div>`);
</script>
</body>
</html>
